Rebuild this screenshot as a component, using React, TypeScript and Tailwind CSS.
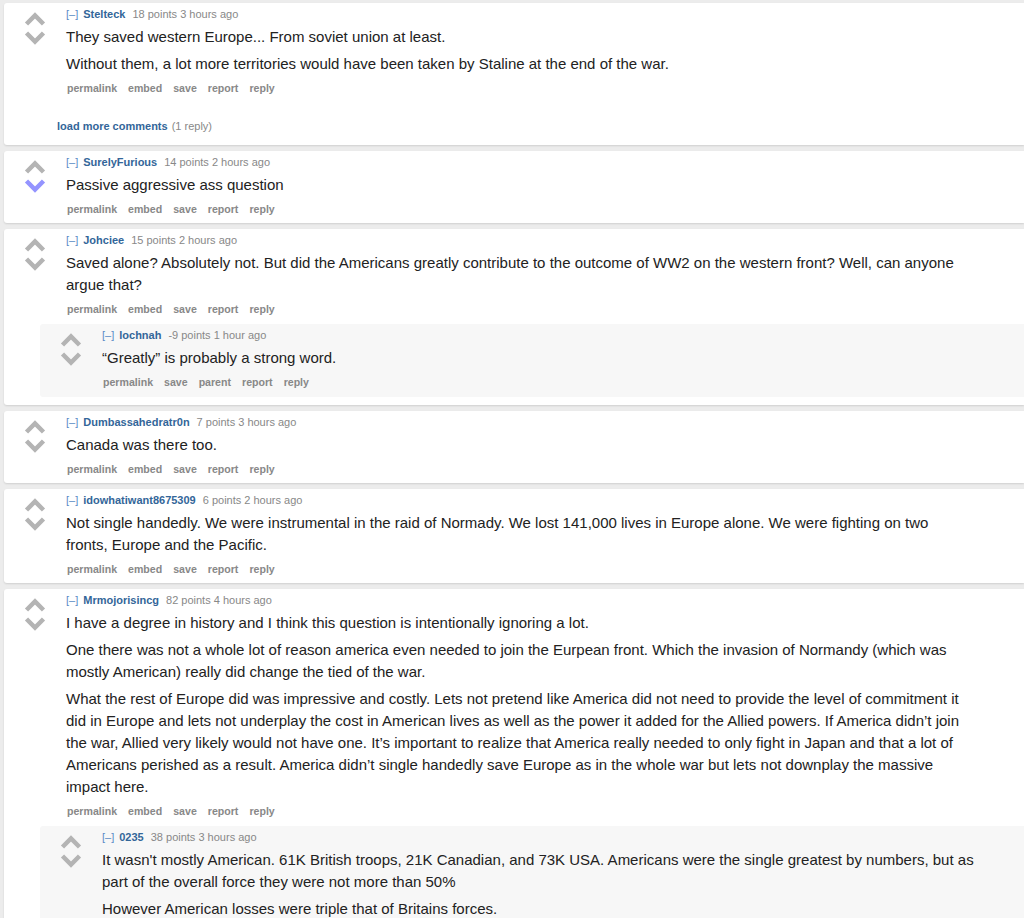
import React from 'react'

type Comment = {
  author: string
  points: string
  age: string
  body: string[]
  buttons: string[]
  downvoted?: boolean
  children?: Comment[]
  loadMore?: string
}

const std = ['permalink', 'embed', 'save', 'report', 'reply']

const comments: Comment[] = [
  {
    author: 'Stelteck',
    points: '18 points',
    age: '3 hours ago',
    body: [
      'They saved western Europe... From soviet union at least.',
      'Without them, a lot more territories would have been taken by Staline at the end of the war.',
    ],
    buttons: std,
    loadMore: '(1 reply)',
  },
  {
    author: 'SurelyFurious',
    points: '14 points',
    age: '2 hours ago',
    body: ['Passive aggressive ass question'],
    buttons: std,
    downvoted: true,
  },
  {
    author: 'Johciee',
    points: '15 points',
    age: '2 hours ago',
    body: [
      'Saved alone? Absolutely not. But did the Americans greatly contribute to the outcome of WW2 on the western front? Well, can anyone argue that?',
    ],
    buttons: std,
    children: [
      {
        author: 'lochnah',
        points: '-9 points',
        age: '1 hour ago',
        body: ['\u201cGreatly\u201d is probably a strong word.'],
        buttons: ['permalink', 'save', 'parent', 'report', 'reply'],
      },
    ],
  },
  {
    author: 'Dumbassahedratr0n',
    points: '7 points',
    age: '3 hours ago',
    body: ['Canada was there too.'],
    buttons: std,
  },
  {
    author: 'idowhatiwant8675309',
    points: '6 points',
    age: '2 hours ago',
    body: [
      'Not single handedly. We were instrumental in the raid of Normady. We lost 141,000 lives in Europe alone. We were fighting on two fronts, Europe and the Pacific.',
    ],
    buttons: std,
  },
  {
    author: 'Mrmojorisincg',
    points: '82 points',
    age: '4 hours ago',
    body: [
      'I have a degree in history and I think this question is intentionally ignoring a lot.',
      'One there was not a whole lot of reason america even needed to join the Eurpean front. Which the invasion of Normandy (which was mostly American) really did change the tied of the war.',
      'What the rest of Europe did was impressive and costly. Lets not pretend like America did not need to provide the level of commitment it did in Europe and lets not underplay the cost in American lives as well as the power it added for the Allied powers. If America didn\u2019t join the war, Allied very likely would not have one. It\u2019s important to realize that America really needed to only fight in Japan and that a lot of Americans perished as a result. America didn\u2019t single handedly save Europe as in the whole war but lets not downplay the massive impact here.',
    ],
    buttons: std,
    children: [
      {
        author: '0235',
        points: '38 points',
        age: '3 hours ago',
        body: [
          "It wasn't mostly American. 61K British troops, 21K Canadian, and 73K USA. Americans were the single greatest by numbers, but as part of the overall force they were not more than 50%",
          'However American losses were triple that of Britains forces.',
        ],
        buttons: std,
      },
    ],
  },
]

function Chevron({ up, color }: { up?: boolean; color: string }) {
  return (
    <svg width="22" height="14" viewBox="0 0 22 14" className="block">
      <polyline
        points={up ? '2.5,12 11,3.5 19.5,12' : '2.5,2 11,10.5 19.5,2'}
        fill="none"
        stroke={color}
        strokeWidth="4.5"
      />
    </svg>
  )
}

function Votes({ downvoted }: { downvoted?: boolean }) {
  return (
    <div className="w-[62px] shrink-0 flex flex-col items-center pt-[9px] gap-[5px]">
      <Chevron up color="#b4b4b4" />
      <Chevron color={downvoted ? '#9494ff' : '#b4b4b4'} />
    </div>
  )
}

function CommentBlock({ c, nested }: { c: Comment; nested?: boolean }) {
  const pad = nested || c.children ? 'pb-[8px]' : 'pb-[7px]'
  return (
    <div
      className={
        nested
          ? `ml-[36px] mt-[8px] bg-[#f7f7f7] rounded-l-[3px] ${pad}`
          : `ml-[4px] bg-white rounded-l-[3px] shadow-[0_1px_2px_rgba(0,0,0,0.12)] ${pad}`
      }
    >
      <div className="flex">
        <Votes downvoted={c.downvoted} />
        <div className={`flex-1 pt-[4px] ${nested ? 'pr-[30px]' : 'pr-[58px]'}`}>
          <div className="text-[11px] leading-[14px]">
            <span className="text-[#5a8ac6]">[–]</span>
            <span className="ml-[5px] font-bold text-[#336699]">{c.author}</span>
            <span className="ml-[7px] text-[#888]">
              {c.points} {c.age}
            </span>
          </div>
          <div className="mt-[5px] text-[15px] leading-[22px] text-[#222]">
            {c.body.map((p, i) => (
              <p key={i} className={i > 0 ? 'mt-[5px]' : ''}>
                {p}
              </p>
            ))}
          </div>
          <div className="mt-[6px] flex gap-[11px] pl-[1px] text-[10.6px] leading-[14px] font-bold text-[#888]">
            {c.buttons.map((b) => (
              <span key={b}>{b}</span>
            ))}
          </div>
        </div>
      </div>
      {c.children?.map((ch) => (
        <CommentBlock key={ch.author} c={ch} nested />
      ))}
      {c.loadMore && (
        <div className="ml-[53px] mt-[24px] mb-[5px] text-[11px] leading-[14px]">
          <span className="font-bold text-[#336699]">load more comments</span>
          <span className="ml-[4px] text-[#888]">{c.loadMore}</span>
        </div>
      )}
    </div>
  )
}

export default function App() {
  return (
    <div
      className="min-h-screen h-[918px] overflow-hidden bg-[#ececec] pt-[3px] flex flex-col gap-[6px]"
      style={{ fontFamily: '"Liberation Sans", Arial, sans-serif' }}
    >
      {comments.map((c) => (
        <CommentBlock key={c.author} c={c} />
      ))}
    </div>
  )
}
